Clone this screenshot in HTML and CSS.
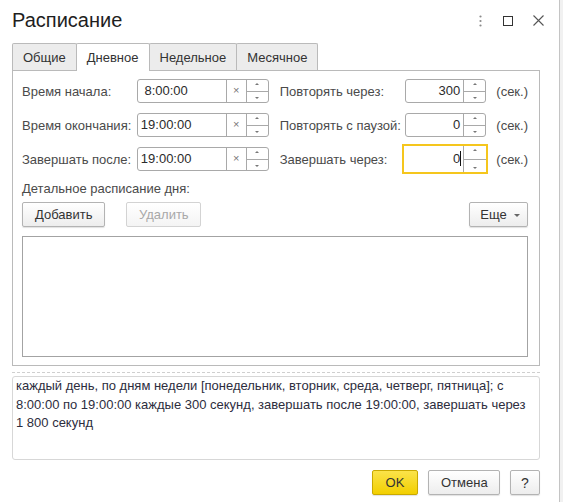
FILE: index.html
```html
<!DOCTYPE html>
<html lang="ru">
<head>
    <meta charset="UTF-8">
    <title>Расписание</title>
    <link rel="stylesheet" href="styles.css">
</head>
<body>

    <div class="window">

        <!-- Title bar -->
        <div class="titlebar">
            <h1 class="title">Расписание</h1>
            <div class="win-controls">
                <svg class="icon-more" width="3" height="12" viewBox="0 0 3 12">
                    <circle cx="1.5" cy="1.5" r="1.1"/>
                    <circle cx="1.5" cy="6" r="1.1"/>
                    <circle cx="1.5" cy="10.5" r="1.1"/>
                </svg>
                <svg class="icon-max" width="10" height="10" viewBox="0 0 10 10">
                    <rect x="0.5" y="0.5" width="9" height="9"/>
                </svg>
                <svg class="icon-close" width="11" height="11" viewBox="0 0 11 11">
                    <path d="M0.5 0.5 L10.5 10.5 M10.5 0.5 L0.5 10.5"/>
                </svg>
            </div>
        </div>

        <!-- Tabs -->
        <div class="tabs">
            <div class="tab">Общие</div>
            <div class="tab active">Дневное</div>
            <div class="tab">Недельное</div>
            <div class="tab">Месячное</div>
        </div>

        <div class="panel">
            <div class="fields">
                <div class="field-row">
                    <span class="label label-left">Время начала:</span>
                    <div class="input time-input">
                        <span class="value">&nbsp;8:00:00</span>
                        <span class="clear">×</span>
                        <span class="spin"><i class="up"></i><i class="down"></i></span>
                    </div>
                    <span class="label label-right">Повторять через:</span>
                    <div class="input num-input">
                        <span class="value">300</span>
                        <span class="spin"><i class="up"></i><i class="down"></i></span>
                    </div>
                    <span class="unit">(сек.)</span>
                </div>

                <div class="field-row">
                    <span class="label label-left">Время окончания:</span>
                    <div class="input time-input">
                        <span class="value">19:00:00</span>
                        <span class="clear">×</span>
                        <span class="spin"><i class="up"></i><i class="down"></i></span>
                    </div>
                    <span class="label label-right">Повторять с паузой:</span>
                    <div class="input num-input">
                        <span class="value">0</span>
                        <span class="spin"><i class="up"></i><i class="down"></i></span>
                    </div>
                    <span class="unit">(сек.)</span>
                </div>

                <div class="field-row">
                    <span class="label label-left">Завершать после:</span>
                    <div class="input time-input">
                        <span class="value">19:00:00</span>
                        <span class="clear">×</span>
                        <span class="spin"><i class="up"></i><i class="down"></i></span>
                    </div>
                    <span class="label label-right">Завершать через:</span>
                    <div class="input num-input focused">
                        <span class="value">0<span class="caret"></span></span>
                        <span class="spin"><i class="up"></i><i class="down"></i></span>
                    </div>
                    <span class="unit">(сек.)</span>
                </div>
            </div>

            <div class="section-title">Детальное расписание дня:</div>

            <div class="toolbar">
                <button class="btn btn-add">Добавить</button>
                <button class="btn btn-delete" disabled>Удалить</button>
                <button class="btn btn-more">Еще<i class="caret-down"></i></button>
            </div>

            <div class="table"></div>
        </div>

        <div class="separator"></div>

        <div class="summary">каждый день, по дням недели [понедельник, вторник, среда, четверг, пятница]; с 8:00:00 по 19:00:00 каждые 300 секунд, завершать после 19:00:00, завершать через 1 800 секунд</div>

        <div class="footer">
            <button class="btn btn-ok">OK</button>
            <button class="btn btn-cancel">Отмена</button>
            <button class="btn btn-help">?</button>
        </div>
    </div>

</body>
</html>
```

FILE: styles.css
```css
body {
    margin: 0;
    padding: 0;
    font-family: "Liberation Sans", Arial, sans-serif;
    font-size: 13px;
    color: #333;
    background-color: #f1f1f1;
}

.window {
    width: 560px;
    height: 502px;
    background-color: #fff;
    border-right: 1px solid #c4c4c4;
    box-sizing: border-box;
}

/* Title bar */
.titlebar {
    display: flex;
    align-items: center;
    height: 41px;
    padding: 0 15px 0 12px;
}

.title {
    margin: 0;
    font-size: 20px;
    font-weight: normal;
    line-height: 23px;
    color: #1e1e1e;
}

.win-controls {
    margin-left: auto;
    display: flex;
    align-items: center;
}

.icon-more {
    fill: #8a8a8a;
    margin-right: 21px;
}

.icon-max {
    fill: none;
    stroke: #333;
    stroke-width: 1;
    margin-right: 20px;
}

.icon-close {
    fill: none;
    stroke: #555;
    stroke-width: 1.1;
}

/* Tabs */
.tabs {
    display: flex;
    margin: 2px 0 0 12px;
    height: 27px;
}

.tab {
    height: 27px;
    line-height: 27px;
    padding: 0 10px;
    background-color: #ececec;
    border: 1px solid #bababa;
    border-bottom: none;
    border-radius: 2px 2px 0 0;
    box-sizing: border-box;
    color: #333;
}

.tab + .tab {
    margin-left: -1px;
}

.tab.active {
    position: relative;
    z-index: 1;
    height: 28px;
    background-color: #fff;
}

/* Panel */
.panel {
    margin: 0 19px 0 12px;
    height: 296px;
    border: 1px solid #bababa;
    box-sizing: border-box;
    padding: 8px 11px 8px 9px;
}

.fields {
    display: flex;
    flex-direction: column;
    gap: 10px;
}

.field-row {
    display: flex;
    align-items: center;
    height: 24px;
}

.label {
    color: #4a4a4a;
    white-space: nowrap;
}

.label-left {
    width: 115px;
}

.label-right {
    width: 126px;
    margin-left: 11px;
}

.unit {
    margin-left: 10px;
    color: #4a4a4a;
}

.input {
    display: flex;
    height: 24px;
    border: 1px solid #a9a9a9;
    border-radius: 3px;
    box-sizing: border-box;
    background-color: #fff;
}

.time-input {
    width: 132px;
}

.num-input {
    width: 81px;
}

.input .value {
    flex: 1;
    padding: 0 3px;
    line-height: 22px;
    color: #2b2b2b;
    white-space: nowrap;
}

.num-input .value {
    text-align: right;
}

.input .clear {
    width: 19px;
    border-left: 1px solid #a9a9a9;
    text-align: center;
    line-height: 21px;
    font-size: 11px;
    color: #777;
}

.input .spin {
    width: 21px;
    border-left: 1px solid #a9a9a9;
    display: flex;
    flex-direction: column;
}

.spin i {
    flex: 1;
    display: flex;
    justify-content: center;
}

.spin .up {
    align-items: flex-start;
    padding-top: 3px;
    border-bottom: 1px solid #a9a9a9;
}

.spin .down {
    align-items: flex-end;
    padding-bottom: 3px;
}

.spin .up::after,
.spin .down::after {
    content: "";
    border-left: 2px solid transparent;
    border-right: 2px solid transparent;
}

.spin .up::after {
    border-bottom: 2px solid #777;
}

.spin .down::after {
    border-top: 2px solid #777;
}

.input.focused {
    width: 86px;
    height: 30px;
    margin: -3px -2px -3px -3px;
    border: 2px solid #f5c61d;
    border-radius: 0;
}

.input.focused .value {
    line-height: 26px;
    padding-right: 2px;
}

.input.focused .spin {
    width: 22px;
    padding: 3px 0;
}

.input.focused .spin .up {
    padding-top: 0;
}

.input.focused .spin .down {
    padding-bottom: 0;
}

.caret {
    display: inline-block;
    width: 1px;
    height: 15px;
    background-color: #111;
    vertical-align: -3px;
}

/* Detailed schedule */
.section-title {
    margin-top: 10px;
    line-height: 15px;
    color: #4a4a4a;
}

.toolbar {
    display: flex;
    margin-top: 6px;
}

.btn {
    height: 25px;
    padding: 0 12px;
    font-family: inherit;
    font-size: 13px;
    color: #333;
    white-space: nowrap;
    background: linear-gradient(#ffffff, #ededed);
    border: 1px solid #b3b3b3;
    border-radius: 2px;
    box-shadow: 0 1px 1px rgba(0, 0, 0, 0.12);
    cursor: pointer;
}

.btn-add {
    width: 83px;
}

.btn-delete {
    width: 75px;
    margin-left: 21px;
    color: #a8a8a8;
    border-color: #d3d3d3;
    background: linear-gradient(#ffffff, #f4f4f4);
    box-shadow: none;
}

.btn-more {
    width: 59px;
    margin-left: auto;
    padding: 0 0 0 3px;
}

.caret-down {
    display: inline-block;
    margin-left: 7px;
    vertical-align: 2px;
    border-left: 3px solid transparent;
    border-right: 3px solid transparent;
    border-top: 3px solid #666;
}

.table {
    margin-top: 9px;
    height: 121px;
    border: 1px solid #a3a3a3;
    box-sizing: border-box;
}

/* Summary */
.separator {
    margin: 6px 19px 0 12px;
    border-top: 1px dashed #cfcfcf;
}

.summary {
    margin: 3px 19px 0 12px;
    height: 84px;
    padding: 0 3px;
    border: 1px solid #d7d7d7;
    border-radius: 3px;
    box-sizing: border-box;
    line-height: 18.5px;
    color: #2d2d3d;
}

/* Footer */
.footer {
    display: flex;
    justify-content: flex-end;
    margin: 10px 19px 0 0;
}

.footer .btn + .btn {
    margin-left: 10px;
}

.btn-ok {
    width: 46px;
    padding: 0;
    background: linear-gradient(#fbe34a, #f2cf00);
    border-color: #c9a900;
}

.btn-cancel {
    width: 72px;
    margin-left: 9px;
}

.btn-help {
    width: 30px;
    padding: 0;
    font-size: 14px;
}
```
